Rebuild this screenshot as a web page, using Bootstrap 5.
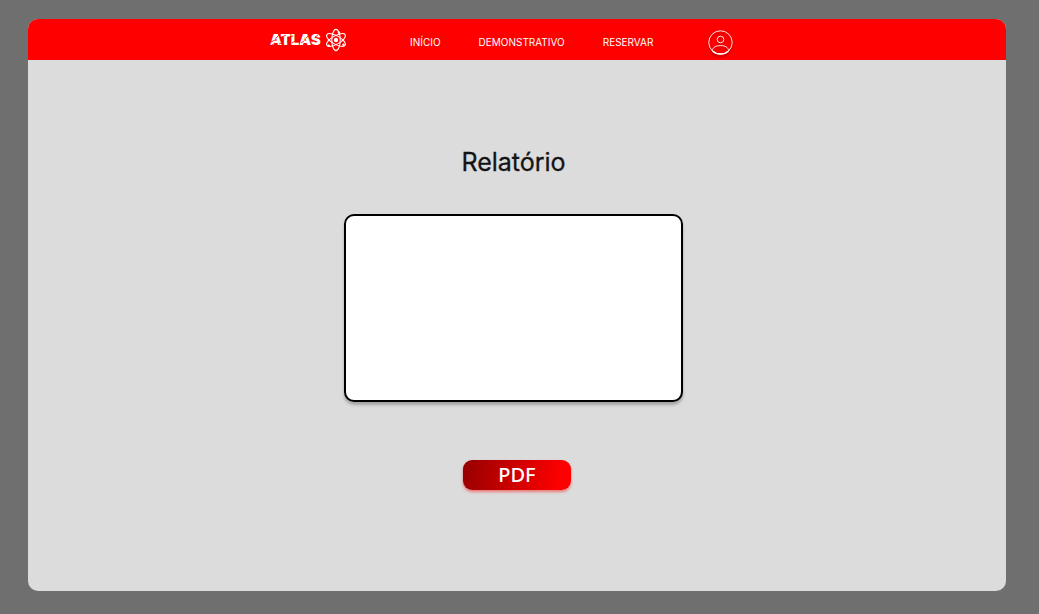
<!DOCTYPE html>
<html lang="pt-BR">
<head>
<meta charset="utf-8">
<meta name="viewport" content="width=device-width, initial-scale=1">
<title>Atlas – Relatório</title>
<link href="https://cdn.jsdelivr.net/npm/bootstrap@5.3.0/dist/css/bootstrap.min.css" rel="stylesheet">
<style>
  body { background: #6f6f6f; font-family: Inter, "Liberation Sans", sans-serif; padding: 19px 33px 23px 28px; }
  .app-frame { background: #dcdcdc; border-radius: 10px; }
  .app-bar { background: #f00; height: 41px; padding: 0 31px 0 0; }
  .bar-inner { width: 463px; }
  .brand { color: #fff; font-size: 15px; font-weight: 900; line-height: 20px; width: 140px; }
  .brand-icon { margin-left: 4px; }
  .brand-wear { inset: 0; }
  .bar-links { gap: 38px; padding-top: 4px; }
  .bar-links a { color: #fff; font-size: 10px; line-height: 16px; }
  .profile { margin-top: 6px; filter: drop-shadow(0 2px 1px rgba(0, 0, 0, .3)); }
  .report { padding-top: 82px; }
  .shifted { margin-right: 7px; }
  .report-title { color: #141414; font-size: 25px; line-height: 40px; margin-bottom: 32px; font-weight: 400; -webkit-text-stroke: .3px #141414; }
  .report-box { background: #fff; border: 2px solid #000; border-radius: 10px; width: 339px; height: 188px; box-shadow: 0 3px 3px rgba(0, 0, 0, .25); }
  .btn-pdf { background: linear-gradient(100deg, #960000, #f00 90%); color: #fff; border-radius: 9px; width: 108px; height: 30px; margin-top: 58px; font: 500 20px/30px "Noto Sans", "Open Sans", sans-serif; box-shadow: 0 2px 3px rgba(255, 0, 0, .45); }
  .btn-pdf:hover { color: #fff; }
</style>
</head>
<body class="d-flex flex-column min-vh-100">
<div class="app-frame flex-grow-1 overflow-hidden">
  <nav class="app-bar navbar justify-content-center" aria-label="Principal">
    <div class="bar-inner d-flex align-items-center">
      <a class="brand d-flex align-items-center text-decoration-none" href="#">
        <span class="position-relative">ATLAS
          <svg class="brand-wear position-absolute" width="52" height="20" viewBox="0 0 52 20" fill="none" stroke="#f00" stroke-width=".8" aria-hidden="true">
            <path d="M1 12l4-2M2 15l3-2M9 5l-3 3M12 13l-3 1M12 7l4-2M17 12l3-2M19 7l4-1M22 13l3-2M25 8l3-2M31 13l3-2M36 8l3-3M41 12l4-1M45 7l3-2"/>
          </svg>
        </span>
        <svg class="brand-icon" width="22" height="24" viewBox="0 0 22 24" fill="none" stroke="#fff" stroke-width="1.1" aria-hidden="true">
          <ellipse cx="11" cy="12" rx="4.2" ry="10.6"/>
          <ellipse cx="11" cy="12" rx="4.2" ry="10.6" transform="rotate(60 11 12)"/>
          <ellipse cx="11" cy="12" rx="4.2" ry="10.6" transform="rotate(120 11 12)"/>
          <g fill="#fff" stroke="none">
            <circle cx="11" cy="12" r="2.2"/>
            <circle cx="14" cy="4.6" r="1.2"/>
            <circle cx="3.600" cy="17.800" r="1.300"/>
            <circle cx="18.500" cy="16.800" r="1.200"/>
          </g>
        </svg>
      </a>
      <div class="bar-links d-flex">
        <a class="text-decoration-none" href="#">INÍCIO</a>
        <a class="text-decoration-none" href="#">DEMONSTRATIVO</a>
        <a class="text-decoration-none" href="#">RESERVAR</a>
      </div>
      <a class="profile d-flex ms-auto" href="#" aria-label="Perfil">
        <svg width="25" height="25" viewBox="0 0 25 25" fill="none" stroke="#fff" stroke-width=".9" aria-hidden="true">
          <circle cx="12.500" cy="12.500" r="11.700"/>
          <circle cx="12.500" cy="9.500" r="3.300"/>
          <path d="M4.200 20.700C5 17.400 7.500 15.600 12.500 15.600s7.500 1.800 8.300 5.100"/>
          <path d="M4.500 20.900C9 25 16 25 20.500 20.900" stroke-width="1.3"/>
        </svg>
      </a>
    </div>
  </nav>
  <main class="report d-flex flex-column align-items-center">
    <h1 class="report-title shifted">Relatório</h1>
    <section class="report-box shifted" aria-label="Conteúdo do relatório"></section>
    <button type="button" class="btn btn-pdf border-0 p-0">PDF</button>
  </main>
</div>
<script src="https://cdn.jsdelivr.net/npm/bootstrap@5.3.0/dist/js/bootstrap.bundle.min.js"></script>
</body>
</html>
